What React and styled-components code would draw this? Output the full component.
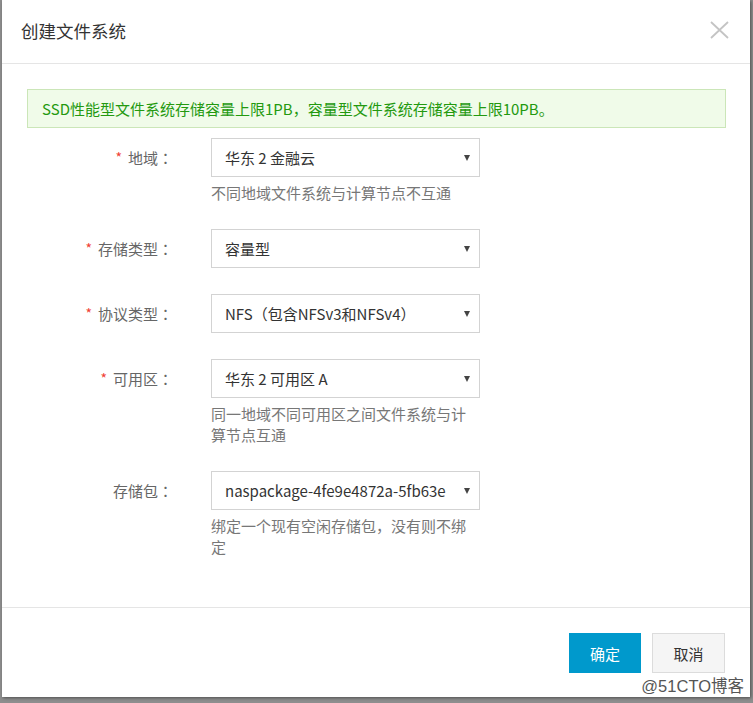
import React from "react";
import styled, { createGlobalStyle } from "styled-components";

const Global = createGlobalStyle`
  html, body { margin: 0; padding: 0; }
  body {
    background: #8e8e8e;
    font-family: "Noto Sans CJK SC", "Noto Sans", sans-serif;
    width: 753px;
    height: 703px;
    overflow: hidden;
  }
`;

const Dialog = styled.div`
  margin-left: 2px;
  width: 748px;
  height: 697px;
  background: #fff;
  box-shadow: 1px 1px 3px rgba(0, 0, 0, 0.45);
  display: flex;
  flex-direction: column;
  position: relative;
`;

const Header = styled.div`
  height: 64px;
  border-bottom: 1px solid #e5e5e5;
  display: flex;
  align-items: center;
  justify-content: space-between;
  padding: 0 21px 0 19px;
  box-sizing: border-box;
  flex-shrink: 0;
`;

const Title = styled.div`
  font-size: 17.5px;
  color: #333;
  line-height: 1;
  margin-top: -2px;
`;

const Close = styled.button`
  border: 0;
  background: none;
  padding: 0;
  width: 20px;
  height: 20px;
  display: flex;
  align-items: center;
  justify-content: center;
  margin-top: -4px;
  cursor: pointer;
`;

const Body = styled.div`
  flex: 1;
  padding: 25px 24px 0 25px;
`;

const Alert = styled.div`
  height: 39px;
  box-sizing: border-box;
  border: 1px solid #cbe6b8;
  background: #f0fbe9;
  color: #23990f;
  font-size: 15px;
  display: flex;
  align-items: center;
  padding-left: 14px;
  margin-bottom: 10px;
`;

const Form = styled.div`
  display: flex;
  flex-direction: column;
`;

const Item = styled.div`
  display: grid;
  grid-template-columns: 146px 269px;
  column-gap: 38px;
  margin-bottom: 26px;
`;

const Label = styled.div`
  height: 39px;
  display: flex;
  align-items: center;
  justify-content: flex-end;
  font-size: 15px;
  color: #666;
  white-space: nowrap;
`;

const Colon = styled.span`
  font-family: "Noto Sans CJK TC", "Noto Sans CJK SC", sans-serif;
`;

const Star = styled.span`
  color: #f04134;
  margin-right: 6px;
  font-size: 14px;
  position: relative;
  top: -1px;
`;

const Control = styled.div`
  display: flex;
  flex-direction: column;
`;

const Select = styled.div`
  height: 39px;
  box-sizing: border-box;
  border: 1px solid #d3d3d3;
  display: flex;
  align-items: center;
  justify-content: space-between;
  padding: 0 9px 0 13px;
  font-size: 15px;
  color: #333;
  white-space: nowrap;
`;

const Arrow = styled.span`
  width: 0;
  height: 0;
  border-left: 3.5px solid transparent;
  border-right: 3.5px solid transparent;
  border-top: 6px solid #444;
  flex-shrink: 0;
`;

const Help = styled.div`
  margin-top: 5px;
  font-size: 15px;
  line-height: 21px;
  color: #777;
`;

const Footer = styled.div`
  border-top: 1px solid #e5e5e5;
  padding: 25px 25px 24px 0;
  display: flex;
  justify-content: flex-end;
  gap: 11px;
  flex-shrink: 0;
`;

const Button = styled.button`
  width: ${(p) => (p.$primary ? "72px" : "73px")};
  height: 40px;
  box-sizing: border-box;
  font-family: inherit;
  font-size: 15px;
  border: 1px solid ${(p) => (p.$primary ? "#0099cc" : "#dcdcdc")};
  background: ${(p) => (p.$primary ? "#0099cc" : "#f5f5f5")};
  color: ${(p) => (p.$primary ? "#fff" : "#333")};
  padding: 0;
  cursor: pointer;
`;

const Watermark = styled.div`
  position: absolute;
  right: 6px;
  bottom: 0px;
  font-family: "Liberation Sans", "Noto Sans CJK SC", sans-serif;
  font-size: 16.5px;
  color: #555;
  text-shadow: 0 0 2px #fff, 0 0 2px #fff, 0 0 3px #fff;
`;

const fields = [
  { label: "地域", req: true, value: "华东 2 金融云", help: "不同地域文件系统与计算节点不互通" },
  { label: "存储类型", req: true, value: "容量型" },
  { label: "协议类型", req: true, value: "NFS（包含NFSv3和NFSv4）" },
  { label: "可用区", req: true, value: "华东 2 可用区 A", help: "同一地域不同可用区之间文件系统与计算节点互通" },
  { label: "存储包", req: false, value: "naspackage-4fe9e4872a-5fb63e", help: "绑定一个现有空闲存储包，没有则不绑定" },
];

export default function App() {
  return (
    <>
      <Global />
      <Dialog>
        <Header>
          <Title>创建文件系统</Title>
          <Close aria-label="关闭">
            <svg width="19" height="18" viewBox="0 0 19 18">
              <path d="M1 1 L18 17 M18 1 L1 17" stroke="#c4c4c4" strokeWidth="1.8" fill="none" />
            </svg>
          </Close>
        </Header>
        <Body>
          <Alert>SSD性能型文件系统存储容量上限1PB，容量型文件系统存储容量上限10PB。</Alert>
          <Form>
            {fields.map((f) => (
              <Item key={f.label}>
                <Label>
                  {f.req && <Star>*</Star>}
                  {f.label}
                  <Colon>：</Colon>
                </Label>
                <Control>
                  <Select>
                    <span>{f.value}</span>
                    <Arrow />
                  </Select>
                  {f.help && <Help>{f.help}</Help>}
                </Control>
              </Item>
            ))}
          </Form>
        </Body>
        <Footer>
          <Button $primary>确定</Button>
          <Button>取消</Button>
        </Footer>
        <Watermark>@51CTO博客</Watermark>
      </Dialog>
    </>
  );
}
